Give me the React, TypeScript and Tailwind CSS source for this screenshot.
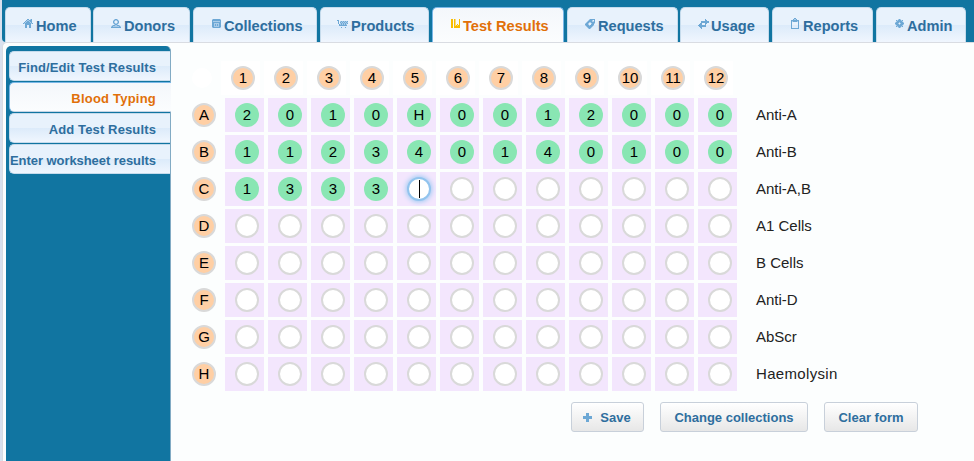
import React from "react";

type Bitmap = string[];

const icons: Record<string, Bitmap> = {
  home: [
    "....##.+#.",
    "...#++###.",
    "..#+##+##.",
    ".#+####+#.",
    "#+######+#",
    "..######..",
    "..##..##..",
    "..##..##..",
    "..##..##..",
  ],
  donors: [
    "...+##+...",
    "..+#++#+..",
    "..#+..+#..",
    "..#+..+#..",
    "..+#++#+..",
    "...+##+...",
    ".+##++##+.",
    "+#++++++#+",
    "##########",
  ],
  collections: [
    "+#######+",
    "#########",
    "#+++++++#",
    "#########",
    "##+++++##",
    "##+#+#+##",
    "##+#+#+##",
    "##+++++##",
    "+#######+",
  ],
  products: [
    "##.........",
    ".#.+#+#+#+#",
    ".#.#+#+#+#+",
    ".#.+#+#+#+#",
    "..#+#+#+#+.",
    "..########.",
    "...........",
    "....#...#..",
  ],
  results: [
    "##.#+...#",
    "##.#+...#",
    "##.#+...#",
    "##.#+...#",
    "##.#+...#",
    "##.#+.#.#",
    "##.#+#+##",
    "##.######",
    "##.######",
  ],
  requests: [
    "....+#####",
    "...+###+.#",
    "..+####++#",
    ".+##++####",
    "+##+..+##+",
    "###+..###.",
    "+###+###+.",
    ".+#####+..",
    "..+###+...",
    "...+#+....",
  ],
  usage: [
    ".......#...",
    ".......##..",
    "...########",
    "...########",
    "..##...##..",
    ".###...#...",
    "########...",
    ".#######...",
    "..##.......",
    "...#.......",
  ],
  reports: [
    "...##...",
    "..#++#..",
    "########",
    "#+####+#",
    "#......#",
    "#......#",
    "#......#",
    "#......#",
    "#......#",
    "#......#",
    "########",
  ],
  admin: [
    "...+#+...",
    ".#+###+#.",
    ".+#####+.",
    "+###+###+",
    "###+.+###",
    "+###+###+",
    ".+#####+.",
    ".#+###+#.",
    "...+#+...",
  ],
  plus: [
    "...###...",
    "...###...",
    "...###...",
    "#########",
    "#########",
    "#########",
    "...###...",
    "...###...",
    "...###...",
  ],
};

function PixelIcon({ name, className }: { name: string; className: string }) {
  const rows = icons[name];
  const width = rows[0].length;
  return (
    <svg
      width={width}
      height={rows.length}
      viewBox={`0 0 ${width} ${rows.length}`}
      shapeRendering="crispEdges"
      fill="currentColor"
      className={`shrink-0 ${className}`}
    >
      {rows.flatMap((row, y) =>
        [...row].map((c, x) =>
          c === "." ? null : (
            <rect key={`${x}-${y}`} x={x} y={y} width={1} height={1} opacity={c === "+" ? 0.5 : 1} />
          ),
        ),
      )}
    </svg>
  );
}

const tabs = [
  { label: "Home", icon: "home", box: "w-[86px]", shift: "ml-[17px] mt-[11px]" },
  { label: "Donors", icon: "donors", box: "ml-[2px] w-[97px]", shift: "ml-[17px] mt-[11px]" },
  { label: "Collections", icon: "collections", box: "ml-[3px] w-[124px]", shift: "ml-[18px] mt-[11px]" },
  { label: "Products", icon: "products", box: "ml-[3px] w-[109px]", shift: "ml-[16px] mt-[12px]" },
  { label: "Test Results", icon: "results", box: "ml-[3px] w-[132px]", shift: "ml-[18px] mt-[11px]", active: true },
  { label: "Requests", icon: "requests", box: "ml-[3px] w-[111px]", shift: "ml-[17px] mt-[11px]" },
  { label: "Usage", icon: "usage", box: "ml-[2px] w-[89px]", shift: "ml-[17px] mt-[11px]" },
  { label: "Reports", icon: "reports", box: "ml-[3px] w-[101px]", shift: "ml-[18px] mt-[10px]" },
  { label: "Admin", icon: "admin", box: "ml-[3px] w-[90px]", shift: "ml-[18px] mt-[11px]" },
];

const blueGlass = "bg-[linear-gradient(#e8f2fc_0%,#e8f2fc_50%,#dcebfa_51%,#f0f6fe_100%)]";
const whiteGlass = "bg-[linear-gradient(#f4f7fb,#fbfdfe)]";

const sideItems = [
  { label: "Find/Edit Test Results", tracking: "tracking-[0.1px]" },
  { label: "Blood Typing", tracking: "tracking-[0.22px]", active: true },
  { label: "Add Test Results", tracking: "tracking-[0.13px]" },
  { label: "Enter worksheet results", tracking: "tracking-[-0.06px]" },
];

const plate = [
  { id: "A", test: "Anti-A", wells: "2010H0012000" },
  { id: "B", test: "Anti-B", wells: "112340140100" },
  { id: "C", test: "Anti-A,B", wells: "1333|" },
  { id: "D", test: "A1 Cells", wells: "" },
  { id: "E", test: "B Cells", wells: "" },
  { id: "F", test: "Anti-D", wells: "" },
  { id: "G", test: "AbScr", wells: "" },
  { id: "H", test: "Haemolysin", wells: "", tracking: "tracking-[0.33px]" },
];

const columns = Array.from({ length: 12 }, (_, i) => i);

const round = "flex h-6 w-6 shrink-0 items-center justify-center rounded-full";

function Heading({ text }: { text: string }) {
  return <div className={`${round} border-2 border-[#d9d9d9] bg-[#ffcfa4]`}>{text}</div>;
}

function Well({ value }: { value?: string }) {
  if (value === "|") {
    return (
      <div className={`${round} border-2 border-[#92c4ee] bg-white shadow-[0_0_5px_1px_#9ccaf2]`}>
        <span className="h-[18px] w-px bg-black" />
      </div>
    );
  }
  if (value) return <div className={`${round} bg-[#89e6b3]`}>{value}</div>;
  return <div className={`${round} border-2 border-[#d9d9d9] bg-white`} />;
}

function Button({ label, width, icon }: { label: string; width: string; icon?: string }) {
  return (
    <button
      className={`flex h-[30px] items-center justify-center whitespace-nowrap rounded-[3px] border border-[#c8d0da] bg-linear-to-b from-white to-[#e7e7e7] text-[13px] leading-[17px] font-bold text-[#2e6e9e] ${width}`}
    >
      {icon && <PixelIcon name={icon} className="mr-2 text-[#6da8d5]" />}
      {label}
    </button>
  );
}

export default function App() {
  return (
    <div className="h-[461px] w-[974px] overflow-hidden bg-[#d9e1ee] pl-[2px] font-['Liberation_Sans',Arial,sans-serif] text-black">
      <header className="flex h-[42px] items-start rounded-bl-[4px] bg-[#1175a1] pl-[3px] pt-[7px]">
        {tabs.map((t) => (
          <div
            key={t.label}
            className={`flex h-[35px] shrink-0 items-start rounded-t-[5px] border border-b-0 ${t.box} ${
              t.active ? `border-[#79b7e7] ${whiteGlass}` : `border-[#c5dbec] ${blueGlass}`
            }`}
          >
            <div className="flex w-[30px] shrink-0">
              <PixelIcon name={t.icon} className={`${t.shift} ${t.active ? "text-[#f9bd01]" : "text-[#6da8d5]"}`} />
            </div>
            <span
              className={`mt-[9px] whitespace-nowrap text-[14.6px] leading-[18px] font-bold ${
                t.active ? "text-[#e17009]" : "text-[#2e6e9e]"
              }`}
            >
              {t.label}
            </span>
          </div>
        ))}
      </header>

      <main className="flex h-[419px] items-start rounded-tl-[5px] border-t border-l border-[#d9dce2] bg-[#fcfefe] pl-[3px] pt-[3px]">
        <nav className="flex h-[416px] w-[165px] shrink-0 flex-col rounded-t-[5px] border-r border-[#82abc4] bg-[#1175a1] pl-[3px] pt-[5px]">
          {sideItems.map((s) => (
            <div
              key={s.label}
              className={`mb-px flex h-[30px] items-center justify-end whitespace-nowrap rounded-l-[5px] border border-r-0 pt-[3px] text-[13px] font-bold ${s.tracking} ${
                s.active
                  ? `-mr-px border-[#79b7e7] border-b-[#c5d5e5] pr-[15px] text-[#e17009] ${whiteGlass}`
                  : `border-[#c5dbec] pr-[14px] text-[#2e6e9e] ${blueGlass}`
              }`}
            >
              {s.label}
            </div>
          ))}
        </nav>

        <section className="ml-[21px] flex flex-col pt-[15px] text-[15px] leading-[18px]">
          <div className="flex h-[34px] items-center">
            <div className="h-5 w-[29px] shrink-0">
              <div className="h-5 w-5 rounded-full bg-white" />
            </div>
            <div className="flex gap-1">
              {columns.map((c) => (
                <div key={c} className="flex h-[34px] w-[39px] items-center bg-white pl-[10px]">
                  <Heading text={String(c + 1)} />
                </div>
              ))}
            </div>
          </div>
          <div className="mt-[3px] flex flex-col gap-[3px]">
            {plate.map((r) => (
              <div key={r.id} className="flex h-[34px] items-center">
                <Heading text={r.id} />
                <div className="ml-[9px] flex gap-1">
                  {columns.map((c) => (
                    <div key={c} className="flex h-[34px] w-[39px] items-center bg-[#f3e6fd] pl-[10px]">
                      <Well value={r.wells[c]} />
                    </div>
                  ))}
                </div>
                <span className={`ml-[19px] whitespace-nowrap text-[#222222] ${r.tracking ?? ""}`}>{r.test}</span>
              </div>
            ))}
          </div>
          <div className="mt-[11px] ml-[379px] flex gap-4">
            <Button label="Save" icon="plus" width="w-[73px] pr-px" />
            <Button label="Change collections" width="w-[148px]" />
            <Button label="Clear form" width="w-[94px]" />
          </div>
        </section>
      </main>
    </div>
  );
}
